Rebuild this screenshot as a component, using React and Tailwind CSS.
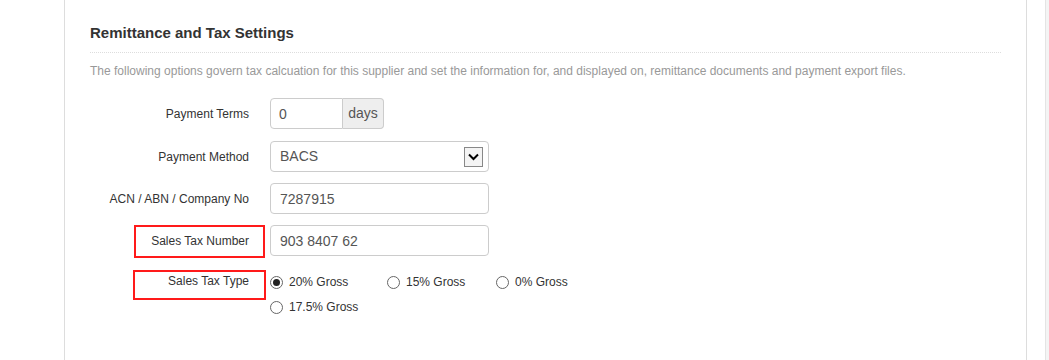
import { useState } from "react";

const labelCls = "w-[160px] shrink-0 pr-px text-right text-[12px] text-[#333]";
const inputCls =
  "h-[31px] w-[219px] rounded-[4px] border border-[#ccc] bg-white px-[9px] text-[14px] text-[#555] outline-none";

function Radio({ checked, label, width }) {
  return (
    <label className={`flex h-[16px] items-center gap-[6px] ${width}`}>
      <span className="flex h-[13px] w-[13px] items-center justify-center rounded-full border border-[#666] bg-white">
        {checked ? <span className="h-[7px] w-[7px] rounded-full bg-[#222]" /> : null}
      </span>
      <span className="text-[12px] text-[#333]">{label}</span>
    </label>
  );
}

export default function App() {
  const [taxType] = useState("20");

  return (
    <div className="flex h-[360px] w-[1049px] bg-white font-['Liberation_Sans',Arial,sans-serif]">
      <div className="w-[64px] shrink-0" />
      <main className="w-[963px] shrink-0 border-x border-[#ddd] px-[25px]">
        <h2 className="border-b border-dotted border-[#ddd] pt-[23px] pb-[9px] text-[15px] leading-5 font-bold text-[#333]">
          Remittance and Tax Settings
        </h2>
        <p className="mt-[10px] text-[12px] leading-4 text-[#999]">
          The following options govern tax calcuation for this supplier and set the information for, and displayed on,
          remittance documents and payment export files.
        </p>

        <div className="mt-[19px] flex flex-col">
          <div className="flex items-center gap-[20px]">
            <div className={labelCls}>Payment Terms</div>
            <div className="flex h-[31px] w-[114px]">
              <input
                readOnly
                value="0"
                className="h-full w-[73px] rounded-l-[4px] border border-[#ccc] px-[8px] text-[14px] text-[#555] outline-none"
              />
              <span className="flex h-full flex-1 items-center justify-center rounded-r-[4px] border border-l-0 border-[#ccc] bg-[#eee] text-[14px] text-[#555]">
                days
              </span>
            </div>
          </div>

          <div className="mt-[12px] flex items-center gap-[20px]">
            <div className={labelCls}>Payment Method</div>
            <div className={`${inputCls} flex items-center justify-between pr-[5px]`}>
              <span>BACS</span>
              <span className="flex h-[20px] w-[19px] items-center justify-center border border-[#888] bg-[#f4f4f4]">
                <svg width="11" height="8" viewBox="0 0 11 8">
                  <path d="M1 1.5 L5.5 6 L10 1.5" fill="none" stroke="#000" strokeWidth="2" />
                </svg>
              </span>
            </div>
          </div>

          <div className="mt-[11px] flex items-center gap-[20px]">
            <div className={labelCls}>ACN / ABN / Company No</div>
            <input readOnly value="7287915" className={inputCls} />
          </div>

          <div className="relative mt-[11px] flex items-center gap-[20px]">
            <div className={labelCls}>Sales Tax Number</div>
            <input readOnly value="903 8407 62" className={inputCls} />
            <div className="absolute top-0 left-[44px] h-[33px] w-[131px] border-2 border-[#ff1a1a]" />
          </div>

          <div className="relative mt-[11px] flex gap-[20px] pt-[7px]">
            <div className={`${labelCls} -mt-[2px]`}>Sales Tax Type</div>
            <div className="flex flex-col gap-[9px]">
              <div className="flex">
                <Radio checked={taxType === "20"} label="20% Gross" width="w-[117px]" />
                <Radio checked={taxType === "15"} label="15% Gross" width="w-[109px]" />
                <Radio checked={taxType === "0"} label="0% Gross" width="w-[80px]" />
              </div>
              <Radio checked={taxType === "17.5"} label="17.5% Gross" width="w-[100px]" />
            </div>
            <div className="absolute top-[3px] left-[43px] h-[30px] w-[133px] border-2 border-[#ff1a1a]" />
          </div>
        </div>
      </main>
      <div className="w-[18px] shrink-0" />
      <div className="flex-1 border-l border-[#e4e4e4] bg-[#f4f4f4]" />
    </div>
  );
}
